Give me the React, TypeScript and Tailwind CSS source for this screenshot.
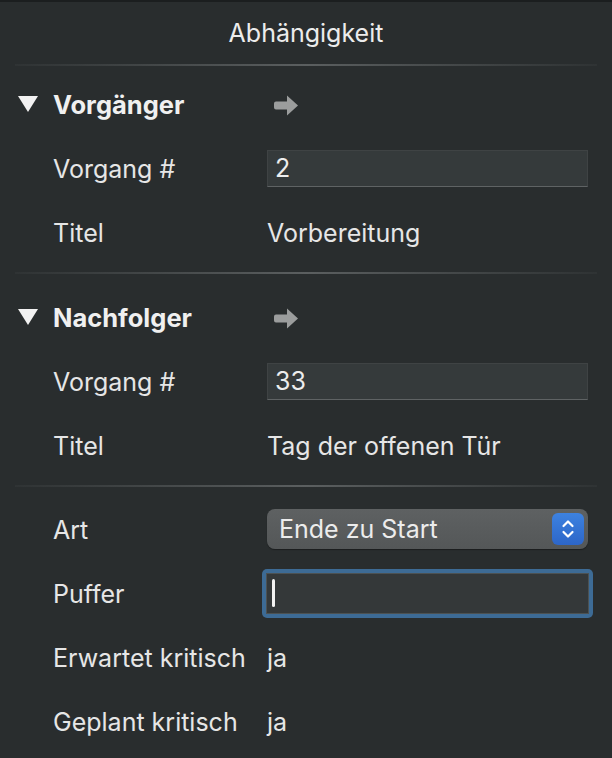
import React from 'react';

const font = { fontFamily: 'Inter, "Noto Sans", "Liberation Sans", sans-serif' };

function Separator() {
  return (
    <div className="mx-[15px] h-[2px] bg-gradient-to-r from-[#2f3334] via-[#5b5f60] to-[#2f3334]" />
  );
}

function Triangle() {
  return (
    <svg width="22" height="18" viewBox="0 0 22 18" className="shrink-0">
      <polygon points="1,1 21,1 11,17" fill="#f2f2f2" />
    </svg>
  );
}

function ArrowIcon() {
  return (
    <svg width="26" height="23" viewBox="0 0 26 23">
      <path
        d="M3 7.5 H14 V1.5 L25 11.5 L14 21.5 V15.5 H3 Q1 15.5 1 13.5 V9.5 Q1 7.5 3 7.5 Z"
        fill="#9b9d9d"
      />
    </svg>
  );
}

function SectionHeader({ title }: { title: string }) {
  return (
    <div className="flex h-[64px] items-center">
      <div className="flex w-[267px] items-center pl-[17px]">
        <Triangle />
        <span className="ml-[14px] pt-[2px] text-[25.5px] font-bold text-[#f0f0f0]">{title}</span>
      </div>
      <div className="pl-[6px] pt-[2px]">
        <ArrowIcon />
      </div>
    </div>
  );
}

function Row({ label, children }: { label: string; children: React.ReactNode }) {
  return (
    <div className="flex h-[64px] items-center">
      <div className="w-[267px] pl-[53px] pt-[3px] text-[25px] text-[#e6e6e6] whitespace-nowrap">{label}</div>
      <div className="flex-1 pr-[24px] text-[25px] text-[#e6e6e6]">{children}</div>
    </div>
  );
}

function Text({ children }: { children: React.ReactNode }) {
  return <div className="pt-[3px]">{children}</div>;
}

function NumberField({ value }: { value: string }) {
  return (
    <div className="flex h-[37px] items-center border border-[#3f4344] border-b-[#5f6364] bg-[#353a3b] pl-[7px] pt-[2px] text-[25px] text-[#ededed]">
      {value}
    </div>
  );
}

function SelectField() {
  return (
    <div className="flex h-[40px] items-center justify-between rounded-[8px] bg-gradient-to-b from-[#5e6162] to-[#545758] pl-[12px] pr-[4px] text-[25px] text-[#ececec] shadow-[0_1px_1px_rgba(0,0,0,0.35)]">
      <span className="pt-[2px]">Ende zu Start</span>
      <div className="flex h-[32px] w-[32px] items-center justify-center rounded-[6px] bg-gradient-to-b from-[#3d82e0] to-[#2d66c8]">
        <svg width="14" height="22" viewBox="0 0 14 22">
          <path d="M2.5 8 L7 3.5 L11.5 8" fill="none" stroke="#ffffff" strokeWidth="2.2" strokeLinecap="round" strokeLinejoin="round" />
          <path d="M2.5 14 L7 18.5 L11.5 14" fill="none" stroke="#ffffff" strokeWidth="2.2" strokeLinecap="round" strokeLinejoin="round" />
        </svg>
      </div>
    </div>
  );
}

function FocusedField() {
  return (
    <div className="-ml-[5px] -mr-[5px] rounded-[5px] bg-[#3d6b95] p-[4px]">
      <div className="flex h-[41px] items-center border border-[#4c5253] bg-[#343839] pl-[5px]">
        <div className="h-[28px] w-[3px] rounded-full bg-[#f2f2f2]" />
      </div>
    </div>
  );
}

export default function App() {
  return (
    <div className="h-[758px] w-[612px] overflow-hidden bg-[#292d2e] border-t-[2px] border-[#1b1e1f]" style={font}>
      <div className="flex h-[62px] items-center justify-center pt-[2px] text-[25px] text-[#ececec]">Abhängigkeit</div>
      <Separator />

      <div className="pt-[6px]">
        <SectionHeader title="Vorgänger" />
        <Row label="Vorgang #">
          <NumberField value="2" />
        </Row>
        <Row label="Titel"><Text>Vorbereitung</Text></Row>
      </div>
      <div className="mt-[8px]">
        <Separator />
      </div>

      <div className="pt-[11px]">
        <SectionHeader title="Nachfolger" />
        <Row label="Vorgang #">
          <NumberField value="33" />
        </Row>
        <Row label="Titel"><Text>Tag der offenen Tür</Text></Row>
      </div>
      <div className="mt-[8px]">
        <Separator />
      </div>

      <div className="pt-[10px]">
        <Row label="Art">
          <SelectField />
        </Row>
        <Row label="Puffer">
          <FocusedField />
        </Row>
        <Row label="Erwartet kritisch"><Text>ja</Text></Row>
        <Row label="Geplant kritisch"><Text>ja</Text></Row>
      </div>
    </div>
  );
}
